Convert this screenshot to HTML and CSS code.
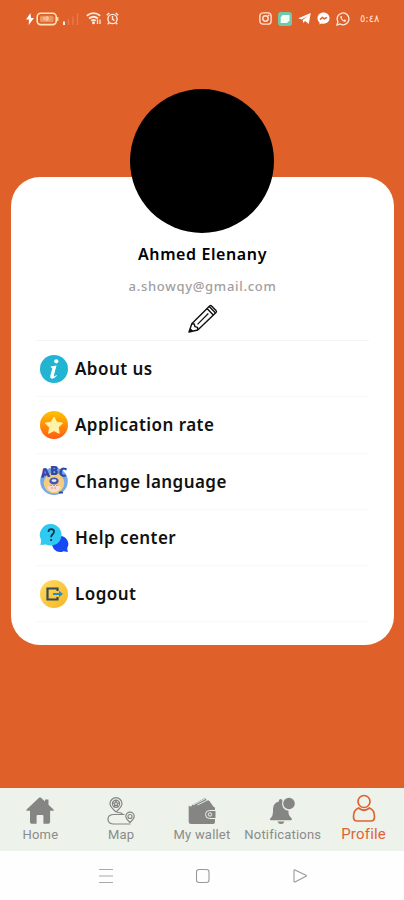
FILE: index.html
```
<!DOCTYPE html>
<html lang="en">
<head>
    <meta charset="UTF-8">
    <meta name="viewport" content="width=device-width, initial-scale=1.0">
    <title>Profile</title>
    <link rel="stylesheet" href="styles.css">
</head>
<body>
    <header class="status">
        <div class="status-left">
            <svg class="bolt" width="8" height="12" viewBox="0 0 8 12"><path d="M4.5 0 0 6.5h3L2.7 12 8 5H5z" fill="#fff"/></svg>
            <svg class="battery" width="23" height="14" viewBox="0 0 23 14"><rect x="1.2" y="1.2" width="19" height="11.4" rx="3.5" fill="none" stroke="#ffe5b8" stroke-width="1.6"/><rect x="4" y="3.7" width="13.5" height="6.4" rx="1.5" fill="#ed9760"/><path d="M8 5v3M10 5h2v3h-2z" fill="none" stroke="#ffe3cf" stroke-width=".8"/><path d="M21.7 5v4" stroke="#ffd080" stroke-width="1.5"/></svg>
            <svg class="signal" width="16" height="12" viewBox="0 0 16 12"><path d="M1 8.5V12" stroke="#fff" stroke-width="1.8"/><path d="M5.5 6v6M10 3.5V12M14.5 0v12" stroke="#e87c50" stroke-width="1.3"/></svg>
            <svg class="wifi" width="16" height="13" viewBox="0 0 16 13"><g fill="none" stroke="#ffeadd" stroke-width="1.8"><path d="M.8 3.8q6.7-5.4 13.4 0M3 6.5q4.5-3.6 9 0M5.3 8.8q2.2-1.8 4.4 0"/><path d="M11.5 7.5V12M14 12V7.5" stroke-width="1.3"/></g><circle cx="7.5" cy="10.8" r="1.5" fill="#ffeadd"/></svg>
            <svg width="13" height="13" viewBox="0 0 13 13"><g fill="none" stroke="#ffeadd" stroke-width="1.4"><circle cx="6.5" cy="7" r="4.6"/><path d="M6.5 4v3.4l2 1M.8 3.3 3.3 1M12.2 3.3 9.7 1M3 10.8l-1.2 1.5M10 10.8l1.2 1.5"/></g></svg>
        </div>
        <div class="status-right">
            <svg width="13" height="13" viewBox="0 0 13 13"><g fill="none" stroke="#ffe3d5" stroke-width="1.4"><rect x=".9" y=".9" width="11.2" height="11.2" rx="3.2"/><circle cx="6.5" cy="6.5" r="2.7"/></g><circle cx="9.7" cy="3.4" r=".8" fill="#ffe3d5"/></svg>
            <svg width="14" height="14" viewBox="0 0 14 14"><rect width="14" height="14" rx="3" fill="#70c9aa"/><path d="M4.500 3h7v5.500L9 11H2.700V5.400z" fill="#effff5"/></svg>
            <svg width="13" height="13" viewBox="0 0 13 13"><path d="M.3 6.2 12.7 1 10.8 12 7 9.1l-1.8 2-.5-3.2L9.8 4 3.6 7.4z" fill="#fff"/></svg>
            <svg width="13" height="13" viewBox="0 0 13 13"><path d="M6.5.6C3 .6.5 3 .5 6.2c0 1.8.8 3.2 2 4.2v2l2-1c4 1.1 8-1.2 8-5.2C12.5 3 10 .6 6.5.6z" fill="#fff"/><path d="m3 7.600 2.400-2.200 2 1.500L10 5.300" fill="none" stroke="#e0602a" stroke-width="1.500"/></svg>
            <svg width="14" height="14" viewBox="0 0 14 14"><path d="m1 13 .9-3.300A5.900 5.900 0 1 1 4.200 12z" fill="none" stroke="#ffeadd" stroke-width="1.300"/><path d="M4.800 4c-.9.9-.6 2.300 1 4s3 2.200 4.200 1.300l-.1-1.200-1.400-.6-.9.700-2-2 .6-.9-.6-1.400z" fill="#ffeadd"/></svg>
            <span class="time">٥:٤٨</span>
        </div>
    </header>

    <main class="profile">
        <section class="card">
            <div class="avatar"></div>
            <h1 class="name">Ahmed Elenany</h1>
            <p class="email">a.showqy@gmail.com</p>
            <svg class="edit" width="30" height="30" viewBox="0 0 30 30"><g fill="none" stroke="#111" stroke-width="1.400" stroke-linejoin="round"><path d="m1 28 2.800-8.300L21.600 2q1-1 2 0L28 6.400q1 1 0 2L9.800 26z"/><path d="m3.800 19.700 2.400.3.800 2.700 2.500.7.300 2.600M19 4.600l6.300 6.400M21.300 2.600l6 6.200"/><path d="M9.500 20.300 20.300 9.500" stroke-width="1.200"/></g><path d="m1 28 1.200-4 2.900 2.800z" fill="#111"/></svg>

            <ul class="menu">
                <li class="item">
                    <svg class="item-icon" viewBox="0 0 28 28"><circle cx="14" cy="14" r="14" fill="#23b3d3"/><circle cx="16.300" cy="6.300" r="2.100" fill="#fff"/><path d="M10.800 11.500q2.500-.3 5.700-1l-2.700 10.300q-.2 1.500 2.600-.7l.5.700q-3 3.300-5.300 2.800-1.900-.4-1.300-2.900l2-7.200q.2-1-1.600-1z" fill="#fff"/></svg>
                    About us
                </li>
                <li class="item">
                    <svg class="item-icon" viewBox="0 0 28 28"><defs><linearGradient id="rate" x2="0" y2="1"><stop stop-color="#ffc400"/><stop offset="1" stop-color="#ff5b12"/></linearGradient></defs><circle cx="14" cy="14" r="14" fill="url(#rate)"/><path d="m14 6 2.600 5.200 5.900.9-4.200 4.200.9 6-5.200-2.700-5.300 2.700.9-6-4.200-4.200 5.900-.9z" fill="#fff3a7" stroke="#fff3a7" stroke-width="1" stroke-linejoin="round"/></svg>
                    Application rate
                </li>
                <li class="item">
                    <svg class="item-icon" viewBox="0 0 28 28"><circle cx="14" cy="14.200" r="13.800" fill="#76a9e8"/><circle cx="14" cy="16" r="10.300" fill="#f4cc7d"/><path d="M7 20q7-5 14 0-2 5-7 5t-7-5" fill="#f9ddd0"/><ellipse cx="14" cy="14" rx="4.700" ry="3.500" fill="#4854b3"/><ellipse cx="14" cy="13.600" rx="2.500" ry="1.300" fill="#e7eaff"/><path d="M10 18.500h8M11 21h6" stroke="#d98e8e" stroke-width="1" stroke-dasharray="2 1"/><path d="M19 25.500h4" stroke="#344ba7" stroke-width="2"/><g class="abc"><text x="1" y="10.500" transform="rotate(-7 4 8)">A</text><text x="10" y="8">B</text><text x="18.500" y="9.300" transform="rotate(7 22 8)">C</text></g></svg>
                    Change language
                </li>
                <li class="item">
                    <svg class="item-icon" viewBox="0 0 28 28"><path d="M20 12a8 8 0 0 1 7.200 12l.6 4-4.300-.8A8 8 0 1 1 20 12z" fill="#1949f2"/><path d="M11 0a10.800 10.800 0 1 1-5 20.500L.5 21l.7-5A10.800 10.800 0 0 1 11 0z" fill="#2fcaf2"/><path d="M8.400 7.900q.2-2.700 2.800-2.700 2.800 0 2.800 2.600 0 1.500-1.600 2.700-1.300 1-1.300 2.800" fill="none" stroke="#102f46" stroke-width="1.700"/><circle cx="11.100" cy="16" r="1.100" fill="#102f46"/></svg>
                    Help center
                </li>
                <li class="item">
                    <svg class="item-icon" viewBox="0 0 28 28"><defs><linearGradient id="out" x2="1" y2="1"><stop stop-color="#ffdc66"/><stop offset="1" stop-color="#f6b522"/></linearGradient></defs><circle cx="14" cy="14" r="14" fill="url(#out)"/><path d="M17.500 11V8.500H7.500v11h10V17" fill="none" stroke="#344b4f" stroke-width="2.200"/><path d="M13 14h8" stroke="#278bc8" stroke-width="2"/><path d="m19 10.800 4 3.200-4 3.200z" fill="#278bc8"/></svg>
                    Logout
                </li>
            </ul>
        </section>
    </main>

    <nav class="tabs">
        <a class="tab">
            <svg width="28" height="28" viewBox="0 0 28 28" fill="#858684"><path d="M13 .8q1-1 2 0l4 3.700V2.500h3.500v5.300l5 4.800q.8.900-.4 1.200h-3V25q0 1.700-1.700 1.700h-5V19q0-1-1-1h-4.800q-1 0-1 1v7.700h-5Q4 26.700 4 25V13.800H1q-1.300-.3-.4-1.200z"/></svg>
            Home
        </a>
        <a class="tab">
            <svg width="28" height="28" viewBox="0 0 28 28" fill="none" stroke="#858684" stroke-width="1.200"><path d="M9 15Q3 9.500 3 6.700a6 6 0 0 1 12 0Q15 9.500 9 15z"/><circle cx="9" cy="6.800" r="3.600"/><path d="m9 3.800.8 2 2 .2-1.500 1.300.4 2L9 8.300 7.300 9.300l.4-2L6.200 6l2-.2zM23 25.500q-4.200-3.800-4.200-6.200a4.200 4.200 0 0 1 8.400 0Q27.200 21.700 23 25.500z"/><circle cx="23" cy="19.500" r="2"/><path d="M17.500 17.500H6q-5 .5-5 4.800t5 4.700h17.500M10 15.500q4 0 5.500 1.300"/></svg>
            Map
        </a>
        <a class="tab">
            <svg width="28" height="28" viewBox="0 0 28 28"><path d="M4 8 17 1l2 2.500h2L25 9v4H2z" fill="#858684"/><path d="m5 8 12-6M9.500 8 19 3.300" stroke="#edf2eb" stroke-width=".9"/><path d="M.7 8.500q.8 1 2.300 1h22q2 0 2 2V25q0 2-2 2H3q-2.300 0-2.300-2.300z" fill="#858684"/><path d="M28 13.500h-6.500a4 4 0 0 0 0 8H28z" fill="#858684" stroke="#edf2eb" stroke-width="1"/><circle cx="22" cy="17.500" r="1.700" fill="none" stroke="#edf2eb" stroke-width="1"/></svg>
            My wallet
        </a>
        <a class="tab">
            <svg width="28" height="28" viewBox="0 0 28 28" fill="#858684"><path d="M11.500 2q2 0 2 2 0 .8-.3 1.200a7 7 0 0 0 6.300 8.600v2.700q.5 2.700 3 4.700 1.300 1.500-.5 2H2q-2-.4-.5-2Q4 19 4 15v-3q0-6 5.800-7.500Q9.500 2 11.500 2zM8.500 24.500h7q-.6 2.500-3.500 2.500T8.500 24.500z"/><circle cx="20" cy="6.500" r="5.800"/></svg>
            Notifications
        </a>
        <a class="tab active">
            <svg width="26" height="30" viewBox="0 0 26 30" fill="none" stroke="#df6332" stroke-width="1.700"><circle cx="13" cy="7.500" r="6"/><path d="M7.500 14q-5 2-5 8.700 0 4.300 3.500 4.300h14q3.500 0 3.500-4.300 0-6.700-5-8.700Q13 18.500 7.500 14z"/></svg>
            Profile
        </a>
    </nav>

    <footer class="system">
        <svg width="16" height="16" viewBox="0 0 16 16"><path d="M1 1.500h14M1 8h14M1 14.500h14" stroke="#aaa" stroke-width="1.100"/></svg>
        <svg width="16" height="16" viewBox="0 0 16 16"><rect x="1.500" y="1.500" width="12.500" height="13" rx="2.500" fill="none" stroke="#999" stroke-width="1.100"/></svg>
        <svg width="16" height="16" viewBox="0 0 16 16"><path d="M2 2.500q0-1 1-.6l11 5.400q.9.500 0 1L3 13.900q-1 .4-1-.6z" fill="none" stroke="#999" stroke-width="1.100"/></svg>
    </footer>
</body>
</html>
```

FILE: styles.css
```
* {
    box-sizing: border-box;
}
body {
    display: flex;
    flex-direction: column;
    height: 900px;
    margin: 0;
    background-color: #e0602a;
    font-family: 'Noto Sans', sans-serif;
}
.status {
    display: flex;
    justify-content: space-between;
    align-items: center;
    height: 37px;
    padding: 0 25px 0 26px;
}
.status-left, .status-right {
    display: flex;
    align-items: center;
}
.status-left .battery {
    margin: 0 4px 0 2px;
}
.status-left .signal {
    margin-right: 7px;
}
.status-left .wifi {
    margin-right: 4px;
}
.status-right {
    gap: 6px;
}
.time {
    width: 19px;
    margin-left: 4px;
    color: #ffe5d8;
    font-family: 'DejaVu Sans', sans-serif;
    font-size: 10px;
    line-height: 14px;
    white-space: nowrap;
}
.profile {
    flex: 1;
    padding: 140px 10px 0 11px;
}
.card {
    display: flex;
    flex-direction: column;
    align-items: center;
    height: 467.5px;
    padding: 0 25px;
    background-color: #fff;
    border-radius: 29px;
}
.avatar {
    flex: none;
    width: 144px;
    height: 144px;
    margin: -88px 1px 0 0;
    background-color: #000;
    border-radius: 50%;
}
.name {
    height: 24px;
    margin: 9px 0 0;
    font-size: 16px;
    font-weight: 600;
    line-height: 24px;
    letter-spacing: 0.6px;
}
.email {
    height: 20px;
    margin: 10px 0 0;
    color: #a0a0a0;
    font-size: 13px;
    font-weight: 500;
    line-height: 20px;
    letter-spacing: 0.7px;
}
.edit {
    margin-top: 8px;
}
.menu {
    width: 100%;
    margin: 6px 0 0;
    padding: 0;
    border-top: 1px solid #f4f4f4;
    list-style: none;
}
.item {
    display: flex;
    align-items: center;
    gap: 7px;
    height: 56.3px;
    padding-left: 4px;
    border-bottom: 1px solid #f8f8f8;
    color: #111;
    font-size: 17px;
    font-weight: 600;
    letter-spacing: 0.45px;
}
.item-icon {
    width: 28px;
    height: 28px;
    overflow: visible;
}
.abc {
    fill: #3445a5;
    font-family: 'Noto Sans', sans-serif;
    font-size: 12.5px;
    font-weight: 900;
    letter-spacing: 0;
}
.tabs {
    display: flex;
    height: 63px;
    background-color: #edf2eb;
}
.tab {
    display: flex;
    flex: 1;
    flex-direction: column;
    align-items: center;
    padding-top: 9px;
    color: #8b8c89;
    font-family: Roboto, sans-serif;
    font-size: 13px;
    line-height: 20px;
    letter-spacing: 0.2px;
}
.tab.active {
    padding-top: 6px;
    color: #df6332;
    font-size: 15px;
}
.system {
    display: flex;
    justify-content: center;
    gap: 81px;
    height: 49px;
    padding: 17px 0 0 2px;
    background-color: #fefefe;
}
```
